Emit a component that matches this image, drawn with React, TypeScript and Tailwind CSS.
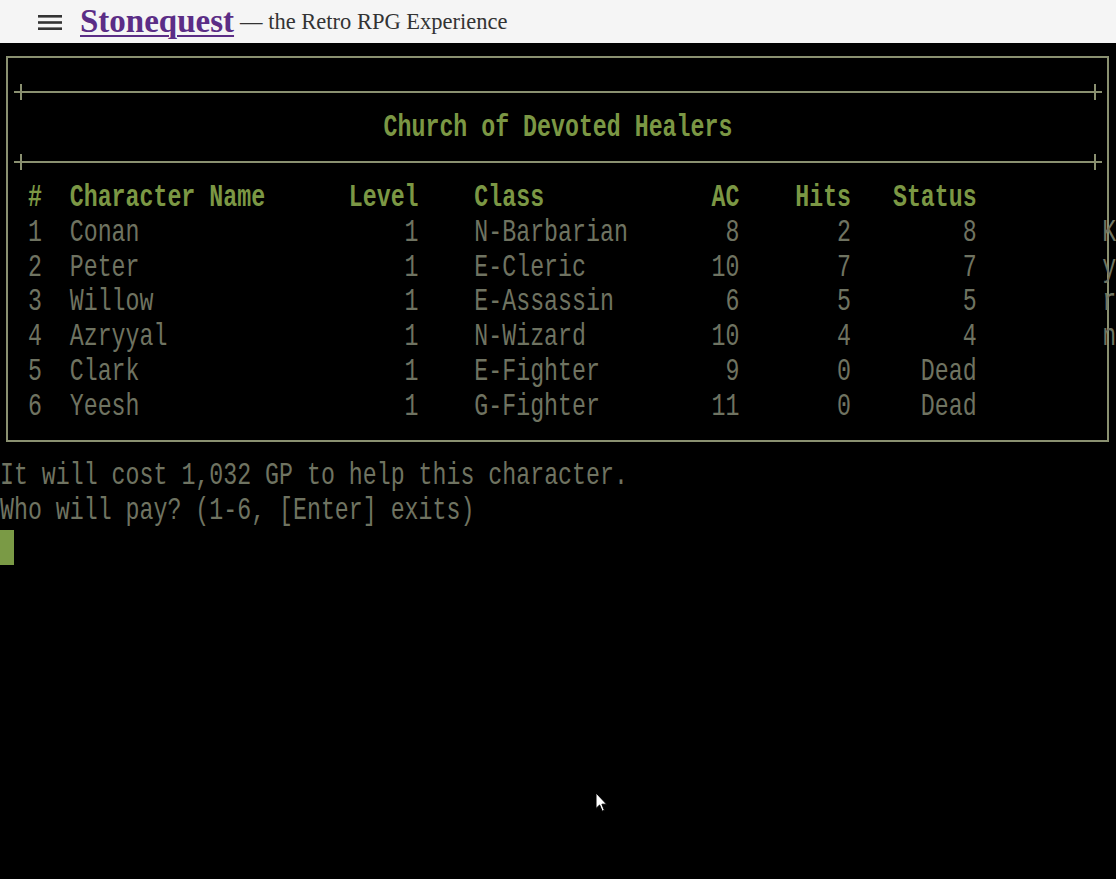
import React from "react";

// 80 column terminal, 13.95px per cell, 34.8px per row
const rows = [
  { n: "1", name: "Conan", lvl: "1", cls: "N-Barbarian", ac: "8", hits: "2", status: "8", tail: "K" },
  { n: "2", name: "Peter", lvl: "1", cls: "E-Cleric", ac: "10", hits: "7", status: "7", tail: "y" },
  { n: "3", name: "Willow", lvl: "1", cls: "E-Assassin", ac: "6", hits: "5", status: "5", tail: "r" },
  { n: "4", name: "Azryyal", lvl: "1", cls: "N-Wizard", ac: "10", hits: "4", status: "4", tail: "n" },
  { n: "5", name: "Clark", lvl: "1", cls: "E-Fighter", ac: "9", hits: "0", status: "Dead", tail: "" },
  { n: "6", name: "Yeesh", lvl: "1", cls: "G-Fighter", ac: "11", hits: "0", status: "Dead", tail: "" },
];

type Part = [number, string];

const at = (col: number, text: string): Part => [col, text];
const right = (end: number, text: string): Part => [end - text.length + 1, text];

// build a line of text from column placements; box lines start at column 1
function build(parts: Part[]) {
  const chars: string[] = Array(84).fill(" ");
  parts.forEach(([col, text]) => {
    for (let i = 0; i < text.length; i++) chars[col + i] = text[i];
  });
  return chars.join("").slice(1).replace(/\s+$/, "");
}

const Line = ({ children, className }: { children?: React.ReactNode; className: string }) => (
  <div className={className}>
    <span className="inline-block leading-[21px] scale-y-[1.32] -translate-y-[1px]">{children}</span>
  </div>
);

const Cross = () => (
  <div className="w-[13.95px] h-[16px] flex items-center">
    <div className="flex-1 h-[2px] bg-[#8a9070]"></div>
    <div className="w-[2px] h-[16px] bg-[#8a9070]"></div>
    <div className="flex-1 h-[2px] bg-[#8a9070]"></div>
  </div>
);

const Separator = () => (
  <div className="h-[34.8px] w-[1088.1px] flex items-center pb-[6px]">
    <Cross />
    <div className="flex-1 h-[2px] bg-[#8a9070]"></div>
    <Cross />
  </div>
);

const header = build([
  at(2, "#"),
  at(5, "Character Name"),
  at(25, "Level"),
  at(34, "Class"),
  at(51, "AC"),
  at(57, "Hits"),
  at(64, "Status"),
]);

export default function App() {
  return (
    <div className="relative min-h-screen flex flex-col bg-black">
      {/* Top bar */}
      <header className="h-[43px] bg-[#f5f5f5] flex items-center pl-[38px] font-['Liberation_Serif',serif]">
        <svg width="24" height="18" viewBox="0 0 24 18" className="mt-[1px]">
          <rect x="0" y="2" width="24" height="2.6" fill="#333" />
          <rect x="0" y="8.2" width="24" height="2.6" fill="#333" />
          <rect x="0" y="14.4" width="24" height="2.6" fill="#333" />
        </svg>
        <a
          href="#"
          className="ml-[18px] text-[33px] font-bold text-[#5b2d86] underline decoration-2 underline-offset-[3px] leading-none"
        >
          Stonequest
        </a>
        <span className="ml-[6px] text-[22.5px] text-[#333] leading-none mt-[1px]">
          — the Retro RPG Experience
        </span>
      </header>

      {/* Terminal */}
      <main className="flex-1 overflow-hidden bg-black font-['Liberation_Mono',monospace] text-[23.25px] text-[#6f7361]">
        <div className="mt-[13px] ml-[6px] w-[1103px] border-2 border-[#8a9070] pt-[19.8px] pb-[14.2px] pl-[5.95px]">
          <Separator />
          <Line className="h-[34.8px] w-[1088.1px] flex items-center justify-center whitespace-pre font-bold text-[#7b9744]">
            Church of Devoted Healers
          </Line>
          <Separator />
          <Line className="h-[34.8px] flex items-center whitespace-pre font-bold text-[#7b9744]">
            {header}
          </Line>
          {rows.map((r) => (
            <Line key={r.n} className="h-[34.8px] flex items-center whitespace-pre">
              {build([
                at(2, r.n),
                at(5, r.name),
                right(29, r.lvl),
                at(34, r.cls),
                right(52, r.ac),
                right(60, r.hits),
                right(69, r.status),
                at(79, r.tail),
              ])}
            </Line>
          ))}
        </div>

        <div className="mt-[18.6px]">
          <Line className="h-[34.8px] flex items-center whitespace-pre">
            It will cost 1,032 GP to help this character.
          </Line>
          <Line className="h-[34.8px] flex items-center whitespace-pre">
            Who will pay? (1-6, [Enter] exits)
          </Line>
          <div className="h-[34.8px] flex">
            <div className="w-[14px] h-full bg-[#7a9a45]"></div>
          </div>
        </div>
      </main>

      {/* mouse pointer */}
      <svg
        width="13"
        height="21"
        viewBox="0 0 13 21"
        className="absolute left-[595px] top-[792px] pointer-events-none"
      >
        <path d="M1 1 L1 16.5 L4.6 13 L7.2 19.2 L9.4 18.3 L6.9 12.2 L11.6 12.2 Z" fill="#fff" stroke="#000" strokeWidth="1" />
      </svg>
    </div>
  );
}
